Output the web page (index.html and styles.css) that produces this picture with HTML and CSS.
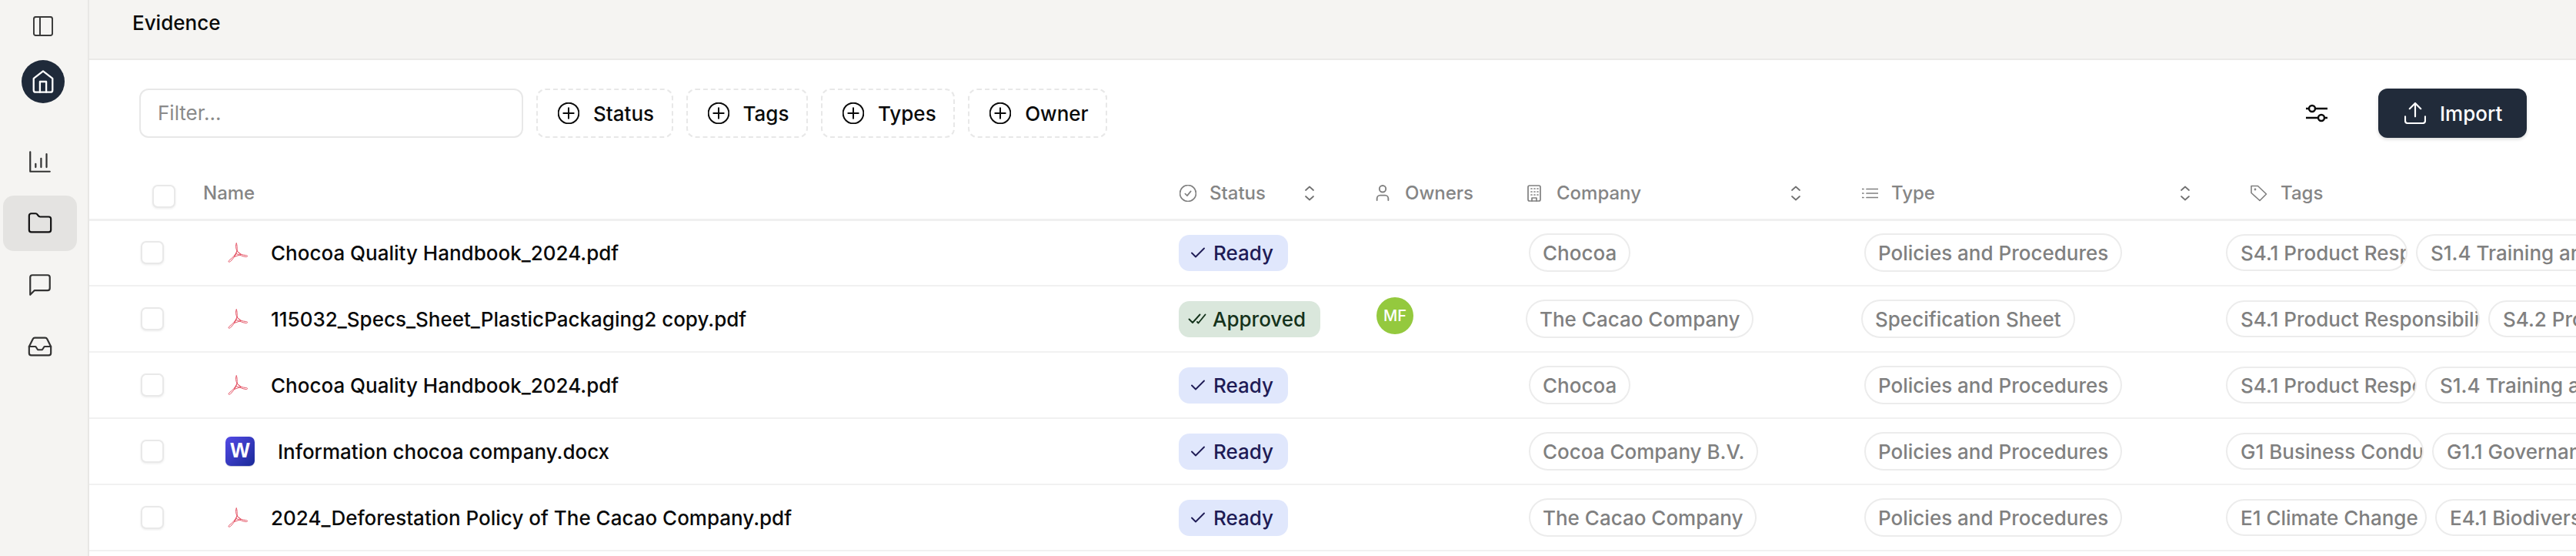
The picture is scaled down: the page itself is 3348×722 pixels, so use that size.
FILE: index.html
```html
<!DOCTYPE html>
<html lang="en">
<head>
<meta charset="utf-8">
<title>Evidence</title>
<link rel="stylesheet" href="styles.css">
</head>
<body>
<svg class="defs" width="0" height="0" aria-hidden="true">
  <defs>
    <symbol id="pdf" viewBox="0 0 27 26"><path d="M12.2 1C10.8 3 11.5 8 13 11C11 16 7 20 3 23C1 25 2.5 26 4.5 24.5C8 21.5 10.5 16.5 12 14.5C16 15.5 21 18.5 25 18.5C27.5 18.5 27 16.5 24.5 16.5C20.5 16 16.5 15.5 13.5 11.5C12.8 8 13.8 3 12.2 1Z"/><path d="M13 11.5L9.5 18.5L18 15.5Z"/></symbol>
    <symbol id="check" viewBox="0 0 20 16"><path d="M2 8.5L7 13.5L18 2.5"/></symbol>
    <symbol id="checks" viewBox="0 0 24 16"><path d="M1.5 8.5L6 13L15.5 2.5M12 12L13.5 13.5L22.5 2.5"/></symbol>
    <symbol id="plus" viewBox="1.5 1.5 21 21"><circle cx="12" cy="12" r="10"/><path d="M12 7v10M7 12h10"/></symbol>
    <symbol id="sort" viewBox="0 0 14 20"><path d="M2 6L7 1.5L12 6M2 14L7 18.5L12 14"/></symbol>
  </defs>
</svg>
<div class="app">
  <aside class="sidebar">
    <div class="side-top">
      <svg class="ico-toggle" viewBox="2.3 2.3 19.4 19.4"><rect x="3" y="3" width="18" height="18" rx="2"/><path d="M9 3v18"/></svg>
      <div class="home"><svg viewBox="2 1 20 22"><path d="M3 9l9-7 9 7v11a2 2 0 0 1-2 2H5a2 2 0 0 1-2-2z"/><path d="M9 22V12h6v10"/></svg></div>
    </div>
    <nav class="nav">
      <div class="nav-item"><svg viewBox="0 0 24 24"><path d="M3 3v18h18M8 17v-3M13 17V9M18 17V5"/></svg></div>
      <div class="nav-item active"><svg viewBox="0 0 24 24"><path d="M20 20a2 2 0 0 0 2-2V8a2 2 0 0 0-2-2h-7.9a2 2 0 0 1-1.69-.9L9.6 3.9A2 2 0 0 0 7.93 3H4a2 2 0 0 0-2 2v13a2 2 0 0 0 2 2Z"/></svg></div>
      <div class="nav-item"><svg viewBox="0 0 24 24"><path d="M21 15a2 2 0 0 1-2 2H7l-4 4V5a2 2 0 0 1 2-2h14a2 2 0 0 1 2 2z"/></svg></div>
      <div class="nav-item"><svg viewBox="0 0 24 24"><path d="M22 12h-6l-2 3h-4l-2-3H2"/><path d="M5.45 5.11 2 12v6a2 2 0 0 0 2 2h16a2 2 0 0 0 2-2v-6l-3.45-6.89A2 2 0 0 0 16.76 4H7.24a2 2 0 0 0-1.79 1.11z"/></svg></div>
    </nav>
  </aside>
  <main class="main">
    <header class="topbar"><span class="page-title">Evidence</span></header>
    <section class="toolbar">
      <div class="filter">Filter...</div>
      <button class="facet"><svg class="ico-plus"><use href="#plus"/></svg>Status</button>
      <button class="facet"><svg class="ico-plus"><use href="#plus"/></svg>Tags</button>
      <button class="facet"><svg class="ico-plus"><use href="#plus"/></svg>Types</button>
      <button class="facet"><svg class="ico-plus"><use href="#plus"/></svg>Owner</button>
      <svg class="ico-sliders" viewBox="0 0 28 24"><circle cx="8" cy="6" r="4"/><circle cx="20" cy="18" r="4"/><path d="M12 6h16M0 18h16M0 6h4M24 18h4"/></svg>
      <button class="import"><svg viewBox="2.3 2.3 19.4 19.4"><path d="M21 15v4a2 2 0 0 1-2 2H5a2 2 0 0 1-2-2v-4M17 8l-5-5-5 5M12 3v12"/></svg>Import</button>
    </section>
    <div class="thead">
      <div class="cb-cell"><span class="checkbox head-cb"></span></div>
      <div class="th">Name</div>
      <div class="th"><svg class="th-ico i22" viewBox="1.5 1.5 21 21"><circle cx="12" cy="12" r="10"/><path d="M8.5 12.5l2.5 2.5 4.5-5.5"/></svg><span class="th-label">Status</span><svg class="sort sort-status"><use href="#sort"/></svg></div>
      <div class="th"><svg class="th-ico i-user" viewBox="4 2 16 20"><circle cx="12" cy="7" r="4"/><path d="M19 21v-2a4 4 0 0 0-4-4H9a4 4 0 0 0-4 4v2"/></svg><span class="th-label wide">Owners</span></div>
      <div class="th"><svg class="th-ico i-building" viewBox="0 0 18 22"><rect x="1" y="1" width="16" height="20" rx="2"/><path d="M6 21v-4h6v4M5 5h1M9 5h1M13 5h1M5 9h1M9 9h1M13 9h1M5 13h1M9 13h1M13 13h1"/></svg><span class="th-label wide">Company</span><svg class="sort sort-company"><use href="#sort"/></svg></div>
      <div class="th"><svg class="th-ico i-list" viewBox="0 0 21 14"><path d="M6 1.5h15M6 7h15M6 12.5h15M0 1.5h2M0 7h2M0 12.5h2"/></svg><span class="th-label">Type</span><svg class="sort sort-type"><use href="#sort"/></svg></div>
      <div class="th"><svg class="th-ico i-tag" viewBox="0 0 23 22"><path d="M2 1.5h8.5l11 10.5-8.5 8.5L2 10.5z"/><circle cx="7" cy="6" r="0.6"/></svg><span class="th-label">Tags</span></div>
    </div>

    <div class="row">
      <div class="cb-cell"><span class="checkbox"></span></div>
      <div class="name"><svg class="ico-pdf"><use href="#pdf"/></svg><span>Chocoa Quality Handbook_2024.pdf</span></div>
      <div><span class="badge ready"><svg class="ico-check"><use href="#check"/></svg>Ready</span></div>
      <div></div>
      <div><span class="pill">Chocoa</span></div>
      <div><span class="pill">Policies and Procedures</span></div>
      <div class="tags"><span class="pill tag w236">S4.1 Product Responsibility</span><span class="pill tag">S1.4 Training and Development</span></div>
    </div>

    <div class="row">
      <div class="cb-cell"><span class="checkbox"></span></div>
      <div class="name"><svg class="ico-pdf"><use href="#pdf"/></svg><span>115032_Specs_Sheet_PlasticPackaging2 copy.pdf</span></div>
      <div><span class="badge approved"><svg class="ico-checks"><use href="#checks"/></svg>Approved</span></div>
      <div><span class="avatar">MF</span></div>
      <div><span class="pill shift">The Cacao Company</span></div>
      <div><span class="pill shift">Specification Sheet</span></div>
      <div class="tags"><span class="pill tag w330">S4.1 Product Responsibility</span><span class="pill tag">S4.2 Product Safety</span></div>
    </div>

    <div class="row">
      <div class="cb-cell"><span class="checkbox"></span></div>
      <div class="name"><svg class="ico-pdf"><use href="#pdf"/></svg><span>Chocoa Quality Handbook_2024.pdf</span></div>
      <div><span class="badge ready"><svg class="ico-check"><use href="#check"/></svg>Ready</span></div>
      <div></div>
      <div><span class="pill">Chocoa</span></div>
      <div><span class="pill">Policies and Procedures</span></div>
      <div class="tags"><span class="pill tag w248">S4.1 Product Responsibility</span><span class="pill tag">S1.4 Training and Development</span></div>
    </div>

    <div class="row">
      <div class="cb-cell"><span class="checkbox"></span></div>
      <div class="name"><span class="ico-word">W</span><span class="word-name">Information chocoa company.docx</span></div>
      <div><span class="badge ready"><svg class="ico-check"><use href="#check"/></svg>Ready</span></div>
      <div></div>
      <div><span class="pill">Cocoa Company B.V.</span></div>
      <div><span class="pill">Policies and Procedures</span></div>
      <div class="tags"><span class="pill tag w257">G1 Business Conduct</span><span class="pill tag">G1.1 Governance and Ethics</span></div>
    </div>

    <div class="row">
      <div class="cb-cell"><span class="checkbox"></span></div>
      <div class="name"><svg class="ico-pdf"><use href="#pdf"/></svg><span>2024_Deforestation Policy of The Cacao Company.pdf</span></div>
      <div><span class="badge ready"><svg class="ico-check"><use href="#check"/></svg>Ready</span></div>
      <div></div>
      <div><span class="pill">The Cacao Company</span></div>
      <div><span class="pill">Policies and Procedures</span></div>
      <div class="tags"><span class="pill tag w261">E1 Climate Change</span><span class="pill tag">E4.1 Biodiversity and Ecosystems</span></div>
    </div>
  </main>
</div>
</body>
</html>
```
FILE: styles.css
```css
* { box-sizing: border-box; }
html, body { margin: 0; height: 100%; overflow: hidden; }
body { font-family: Inter, "Liberation Sans", sans-serif; background: #fff; color: #0a0a0a; }
.defs { position: absolute; }
svg { fill: none; stroke-linecap: round; stroke-linejoin: round; flex: none; display: block; }

.app { display: flex; height: 722px; width: 3348px; }

/* sidebar */
.sidebar { width: 116px; flex: none; background: #f5f4f2; border-right: 2px solid #e8e7e5; }
.side-top { display: flex; flex-direction: column; align-items: center; padding-top: 21px; width: 112px; }
.ico-toggle { width: 26px; height: 26px; stroke: #3a3a3a; stroke-width: 1.5; }
.home { width: 56px; height: 56px; margin-top: 31px; border-radius: 50%; background: #1f2a3a; display: flex; align-items: center; justify-content: center; }
.home svg { width: 28px; height: 30px; stroke: #fff; stroke-width: 1.7; }
.nav { display: flex; flex-direction: column; gap: 8px; padding: 40px 0 0 4px; }
.nav-item { width: 96px; height: 72px; border-radius: 14px; display: flex; align-items: center; justify-content: center; }
.nav-item svg { width: 34px; height: 34px; stroke: #333; stroke-width: 1.55; }
.nav-item.active { background: #e4e3e1; }
.nav-item.active svg { stroke: #111; }

/* main */
.main { flex: 1; min-width: 0; }
.topbar { height: 78px; background: #f5f4f2; border-bottom: 2px solid #ebeae8; padding: 16px 0 0 56px; }
.page-title { font-size: 26px; font-weight: 450; line-height: 28px; color: #0a0a0a; display: block; }

.toolbar { display: flex; align-items: center; gap: 17px; padding: 37px 64px 0 65px; }
.filter { width: 499px; height: 64px; border: 2px solid #e8e8e8; border-radius: 12px; padding-left: 22px; font-size: 26px; line-height: 60px; color: #8a8a8a; }
.facet { height: 64px; border: 2px dashed #e8e8e8; border-radius: 12px; background: #fff; padding: 0 22.5px 0 26px; display: flex; align-items: center; gap: 18px; font: 500 26px Inter, sans-serif; color: #0a0a0a; }
.ico-plus { width: 28px; height: 28px; stroke: #0a0a0a; stroke-width: 1.5; }
.ico-sliders { width: 28px; height: 24px; stroke: #0a0a0a; stroke-width: 2.4; margin-left: auto; margin-right: 49px; }
.import { width: 193px; height: 64px; border: 0; border-radius: 12px; background: #212b3a; box-shadow: 0 2px 4px rgba(0,0,0,.15); color: #fff; font: 500 26px Inter, sans-serif; display: flex; align-items: center; gap: 18px; padding: 0 0 0 34px; }
.import svg { width: 28px; height: 28px; stroke: #fff; stroke-width: 1.5; }

/* table */
.thead { display: grid; grid-template-columns: 66px 1269px 255px 197px 435px 504px 1fr; height: 108px; margin-bottom: -1px; padding: 38px 0 0 82px; border-bottom: 3px solid #f0f0f0; align-items: center; }
.th { display: flex; align-items: center; font-size: 24px; font-weight: 450; color: #858585; white-space: nowrap; }
.th-ico { stroke: #808080; stroke-width: 1.6; }
.i22 { width: 22px; height: 22px; }
.i-user { width: 18px; height: 21px; stroke-width: 1.8; }
.i-building { width: 18px; height: 22px; stroke-width: 1.7; }
.i-list { width: 21px; height: 14px; stroke-width: 1.7; }
.i-tag { width: 23px; height: 22px; stroke-width: 1.6; }
.th-label { margin-left: 17px; }
.th-label.wide { margin-left: 20px; }
.sort { width: 14px; height: 20px; stroke: #707070; stroke-width: 1.7; }
.sort-status { margin-left: 50px; }
.sort-company { margin-left: 194px; }
.sort-type { margin-left: 318px; }
.head-cb { margin-top: 8px; }

.row { display: grid; grid-template-columns: 110px 1239px 256px 199px 436px 470px 1fr; height: 86px; padding-left: 67px; border-bottom: 2px solid #f1f1f1; align-items: center; }
.row > div { min-width: 0; display: flex; align-items: center; }
.checkbox { display: block; width: 30px; height: 30px; border: 2px solid #e9e9e9; border-radius: 7px; background: #fff; box-shadow: 0 1px 3px rgba(0,0,0,.08); }
.name { font-size: 26px; font-weight: 450; color: #0a0a0a; white-space: nowrap; }
.ico-pdf { width: 27px; height: 26px; margin-left: 2px; margin-right: 30px; stroke: #e24a5c; stroke-width: 0.9; }
.ico-word { width: 38px; height: 39px; border-radius: 7px; border-bottom: 1px solid #c5c8d8; background: linear-gradient(135deg, #534ae6, #1a2a98); color: #fff; font: 700 27px "Liberation Sans", sans-serif; display: flex; align-items: center; justify-content: center; margin-right: 30px; }
.word-name { display: block; }

.badge { height: 47px; border-radius: 14px; display: inline-flex; align-items: center; font-size: 26px; font-weight: 450; padding-right: 19px; white-space: nowrap; }
.ready { background: #e0e7fc; color: #1e1b55; padding-left: 15px; }
.approved { background: #dae7dc; color: #14321b; padding-left: 12px; }
.ico-check { width: 20px; height: 16px; stroke: #1e1b55; stroke-width: 1.9; margin-right: 10px; }
.ico-checks { width: 24px; height: 16px; stroke: #14321b; stroke-width: 1.9; margin-right: 8px; }

.avatar { width: 48px; height: 48px; margin-left: 1px; border-radius: 50%; background: #94c93e; color: #fff; font-size: 20px; font-weight: 500; display: flex; align-items: center; justify-content: center; margin-bottom: 8px; }

.pill { height: 50px; border: 2px solid #ececec; border-radius: 25px; padding: 0 16px; display: inline-flex; align-items: center; font-size: 26px; font-weight: 450; color: #808080; background: #fff; white-space: nowrap; overflow: hidden; }
.shift { margin-left: -4px; }
.tags { gap: 11px; overflow: hidden; }
.tag { flex: none; height: 48px; padding-right: 0; padding-left: 17px; }
.w236 { width: 236px; }
.w330 { width: 330px; }
.w248 { width: 248px; }
.w257 { width: 257px; }
.w261 { width: 261px; }
```
